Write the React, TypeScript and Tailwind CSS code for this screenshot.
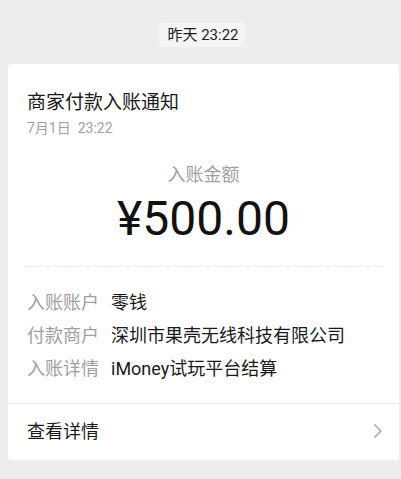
import React from "react";

const rows = [
  { label: "入账账户", value: "零钱" },
  { label: "付款商户", value: "深圳市果壳无线科技有限公司" },
  { label: "入账详情", value: "iMoney试玩平台结算" },
];

const App = () => {
  return (
    <div className="min-h-[479px] w-[401px] bg-[#ededed] pt-[23px] pb-[19px] font-['Roboto','Noto_Sans_CJK_SC',sans-serif]">
      {/* time pill */}
      <div className="flex justify-center">
        <span className="h-[24px] pl-[8px] pr-[6px] ml-[3px] bg-[#f4f4f4] rounded-[2px] text-[15px] leading-[24px] text-[#1c1c1c]">
          昨天 23:22
        </span>
      </div>

      <div className="ml-[8px] w-[391px] mt-[17px] bg-white rounded-[4px]">
        <div className="px-[19px] pt-[26px] pb-[18px]">
          <h3 className="text-[19px] leading-[26px] text-[#1a1a1a]">商家付款入账通知</h3>
          <p className="mt-[2px] text-[14px] leading-[20px] text-[#a0a0a0]">
            7月1日&nbsp;&nbsp;23:22
          </p>

          {/* amount */}
          <div className="mt-[25px] flex flex-col items-center">
            <span className="text-[18px] leading-[24px] text-[#a0a0a0]">入账金额</span>
            <span className="mt-[4px] text-[48px] leading-[56px] text-[#111]">¥500.00</span>
          </div>

          <div className="mt-[19px] -mx-[2px] h-px bg-[linear-gradient(to_right,#e6e6e6_60%,transparent_0)] bg-[length:10px_1px]" />

          <div className="mt-[19px]">
            {rows.map((r) => (
              <div key={r.label} className="flex items-center gap-[12px] text-[18px] leading-[33px]">
                <span className="text-[#a0a0a0]">{r.label}</span>
                <span className="text-[#1a1a1a]">{r.value}</span>
              </div>
            ))}
          </div>
        </div>

        {/* footer */}
        <div className="flex items-center justify-between h-[57px] border-t border-[#efefef] pl-[19px] pr-[16px] pb-[2px]">
          <span className="text-[18px] text-[#1a1a1a]">查看详情</span>
          <svg width="10" height="16" viewBox="0 0 10 16" fill="none">
            <polyline points="1.5,1.5 8,8 1.5,14.5" stroke="#b5b5b5" strokeWidth="1.8" />
          </svg>
        </div>
      </div>
    </div>
  );
};

export default App;
